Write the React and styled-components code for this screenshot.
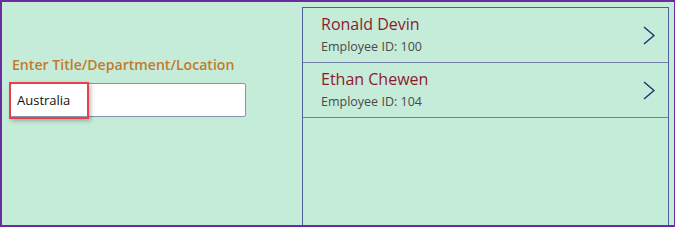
import styled, { createGlobalStyle } from "styled-components";

const GlobalStyle = createGlobalStyle`
  html, body {
    margin: 0;
    padding: 0;
    background: #c5ecd8;
  }
  * {
    box-sizing: border-box;
  }
`;

const employees = [
  { name: "Ronald Devin", id: 100 },
  { name: "Ethan Chewen", id: 104 },
];

const Screen = styled.div`
  width: 675px;
  height: 227px;
  display: flex;
  background: #c5ecd8;
  border: 2px solid #6a2d9c;
  border-right-width: 1px;
  font-family: "Open Sans", "Noto Sans", sans-serif;
  overflow: hidden;
`;

const SearchPanel = styled.div`
  flex: 0 0 300px;
  padding: 53px 0 0 8px;
  display: flex;
  flex-direction: column;
`;

const Label = styled.div`
  padding-left: 2px;
  font-size: 14.1px;
  line-height: 19px;
  font-weight: 600;
  color: #c47a2c;
  margin-bottom: 9px;
`;

const InputWrap = styled.div`
  position: relative;
  width: 236px;
  height: 34px;
`;

const Input = styled.input`
  width: 100%;
  height: 100%;
  border: 1px solid #8496ad;
  border-radius: 2px;
  background: #fff;
  padding: 0 0 0 6px;
  font-family: "Open Sans", "Noto Sans", sans-serif;
  font-size: 13px;
  color: #111;
  outline: none;
`;

const Highlight = styled.div`
  position: absolute;
  left: -1px;
  top: -1px;
  width: 80px;
  height: 37px;
  border: 2px solid #e8414b;
  box-shadow: 2px 2px 4px rgba(0, 0, 0, 0.25);
  pointer-events: none;
`;

const Gallery = styled.div`
  margin-top: 5px;
  width: 367px;
  border: 1px solid #4f5f9c;
  border-bottom: none;
  display: flex;
  flex-direction: column;
`;

const Row = styled.div`
  height: 55px;
  border-bottom: 1px solid #6f7fa8;
  display: flex;
  align-items: center;
  justify-content: space-between;
  padding: 0 13px 0 18px;
`;

const Info = styled.div`
  display: flex;
  flex-direction: column;
  align-self: flex-start;
  padding-top: 5px;
`;

const Name = styled.div`
  font-size: 16px;
  line-height: 22px;
  color: #8a1b2e;
  margin-bottom: 3px;
`;

const EmpId = styled.div`
  font-size: 12.5px;
  line-height: 18px;
  color: #4a4a4a;
`;

const Chevron = () => (
  <svg width="12" height="19" viewBox="0 0 12 19">
    <polyline
      points="1,1 11,9.5 1,18"
      fill="none"
      stroke="#1e2f72"
      strokeWidth="1.4"
    />
  </svg>
);

export default function App() {
  return (
    <>
      <GlobalStyle />
      <Screen>
        <SearchPanel>
          <Label>Enter Title/Department/Location</Label>
          <InputWrap>
            <Input defaultValue="Australia" />
            <Highlight />
          </InputWrap>
        </SearchPanel>
        <Gallery>
          {employees.map((e) => (
            <Row key={e.id}>
              <Info>
                <Name>{e.name}</Name>
                <EmpId>Employee ID: {e.id}</EmpId>
              </Info>
              <Chevron />
            </Row>
          ))}
        </Gallery>
      </Screen>
    </>
  );
}
